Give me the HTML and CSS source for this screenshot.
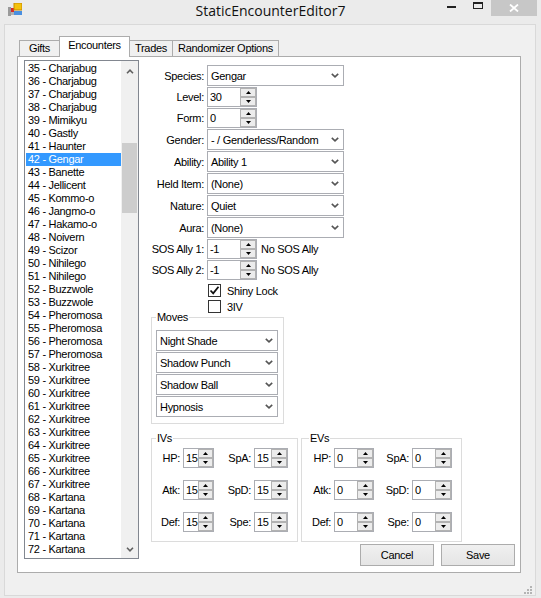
FILE: index.html
```html
<!DOCTYPE html>
<html lang="en">
<head>
  <meta charset="UTF-8">
  <title>StaticEncounterEditor7</title>
  <link rel="stylesheet" href="styles.css">
</head>
<body>
<div class="window">
  <div class="titlebar">
    <div class="title-left">
      <svg class="app-icon" width="14" height="13" viewBox="0 0 14 13">
        <rect x="0" y="4" width="3" height="9" fill="#9a9a9a"/>
        <rect x="3" y="5" width="3" height="4" fill="#d8262a"/>
        <rect x="3" y="9" width="3" height="3" fill="#b0b0b0"/>
        <rect x="6" y="0" width="8" height="7" fill="#f4c20d"/>
        <rect x="6" y="0" width="8" height="7" fill="none" stroke="#c98a00" stroke-width="1"/>
        <rect x="6" y="8" width="8" height="4" fill="#4a8fe0"/>
      </svg>
    </div>
    <div class="title">StaticEncounterEditor7</div>
    <div class="caption-buttons">
      <span class="cap-min"></span>
      <span class="cap-max"></span>
      <span class="cap-close">
        <svg width="10" height="8" viewBox="0 0 10 8"><path d="M1 0.5 L9 7.5 M9 0.5 L1 7.5" stroke="#fff" stroke-width="1.8"/></svg>
      </span>
    </div>
  </div>

  <div class="client">
    <div class="tabcontrol">
      <div class="tabstrip">
        <div class="tab tab-gifts">Gifts</div>
        <div class="tab tab-encounters active">Encounters</div>
        <div class="tab tab-trades">Trades</div>
        <div class="tab tab-random">Randomizer Options</div>
      </div>

      <div class="tabpage">
        <div class="listbox">
          <ul class="items">
            <li>35 - Charjabug</li>
            <li>36 - Charjabug</li>
            <li>37 - Charjabug</li>
            <li>38 - Charjabug</li>
            <li>39 - Mimikyu</li>
            <li>40 - Gastly</li>
            <li>41 - Haunter</li>
            <li class="selected">42 - Gengar</li>
            <li>43 - Banette</li>
            <li>44 - Jellicent</li>
            <li>45 - Kommo-o</li>
            <li>46 - Jangmo-o</li>
            <li>47 - Hakamo-o</li>
            <li>48 - Noivern</li>
            <li>49 - Scizor</li>
            <li>50 - Nihilego</li>
            <li>51 - Nihilego</li>
            <li>52 - Buzzwole</li>
            <li>53 - Buzzwole</li>
            <li>54 - Pheromosa</li>
            <li>55 - Pheromosa</li>
            <li>56 - Pheromosa</li>
            <li>57 - Pheromosa</li>
            <li>58 - Xurkitree</li>
            <li>59 - Xurkitree</li>
            <li>60 - Xurkitree</li>
            <li>61 - Xurkitree</li>
            <li>62 - Xurkitree</li>
            <li>63 - Xurkitree</li>
            <li>64 - Xurkitree</li>
            <li>65 - Xurkitree</li>
            <li>66 - Xurkitree</li>
            <li>67 - Xurkitree</li>
            <li>68 - Kartana</li>
            <li>69 - Kartana</li>
            <li>70 - Kartana</li>
            <li>71 - Kartana</li>
            <li>72 - Kartana</li>
          </ul>
          <div class="vscroll">
            <div class="scroll-arrow up">
              <svg width="8" height="5" viewBox="0 0 8 5"><path d="M1 4.2 L4 1.2 L7 4.2" fill="none" stroke="#606060" stroke-width="1.6"/></svg>
            </div>
            <div class="scroll-thumb"></div>
            <div class="scroll-arrow down">
              <svg width="8" height="5" viewBox="0 0 8 5"><path d="M1 0.8 L4 3.8 L7 0.8" fill="none" stroke="#606060" stroke-width="1.6"/></svg>
            </div>
          </div>
        </div>

        <div class="editor">
          <div class="fields">
            <label>Species:</label>
            <div class="combo"><span>Gengar</span><i class="chev"></i></div>

            <label>Level:</label>
            <div class="num"><span class="val">30</span><span class="spin"><b class="up"></b><b class="down"></b></span></div>

            <label>Form:</label>
            <div class="num"><span class="val">0</span><span class="spin"><b class="up"></b><b class="down"></b></span></div>

            <label>Gender:</label>
            <div class="combo"><span>- / Genderless/Random</span><i class="chev"></i></div>

            <label>Ability:</label>
            <div class="combo"><span>Ability 1</span><i class="chev"></i></div>

            <label>Held Item:</label>
            <div class="combo"><span>(None)</span><i class="chev"></i></div>

            <label>Nature:</label>
            <div class="combo"><span>Quiet</span><i class="chev"></i></div>

            <label>Aura:</label>
            <div class="combo"><span>(None)</span><i class="chev"></i></div>

            <label>SOS Ally 1:</label>
            <div class="sos">
              <div class="num"><span class="val">-1</span><span class="spin"><b class="up"></b><b class="down"></b></span></div>
              <span class="sos-name">No SOS Ally</span>
            </div>

            <label>SOS Ally 2:</label>
            <div class="sos">
              <div class="num"><span class="val">-1</span><span class="spin"><b class="up"></b><b class="down"></b></span></div>
              <span class="sos-name">No SOS Ally</span>
            </div>
          </div>

          <div class="checks">
            <div class="check">
              <span class="box">
                <svg width="11" height="11" viewBox="0 0 11 11"><path d="M1.5 5.5 L4.2 8.3 L9.5 1.8" fill="none" stroke="#111" stroke-width="1.8"/></svg>
              </span>
              Shiny Lock
            </div>
            <div class="check"><span class="box"></span>3IV</div>
          </div>

          <fieldset class="group moves">
            <legend>Moves</legend>
            <div class="combo"><span>Night Shade</span><i class="chev"></i></div>
            <div class="combo"><span>Shadow Punch</span><i class="chev"></i></div>
            <div class="combo"><span>Shadow Ball</span><i class="chev"></i></div>
            <div class="combo"><span>Hypnosis</span><i class="chev"></i></div>
          </fieldset>

          <div class="stat-groups">
            <fieldset class="group ivs">
              <legend>IVs</legend>
              <div class="stat-grid">
                <label>HP:</label>
                <div class="num"><span class="val">15</span><span class="spin"><b class="up"></b><b class="down"></b></span></div>
                <label>SpA:</label>
                <div class="num"><span class="val">15</span><span class="spin"><b class="up"></b><b class="down"></b></span></div>
                <label>Atk:</label>
                <div class="num"><span class="val">15</span><span class="spin"><b class="up"></b><b class="down"></b></span></div>
                <label>SpD:</label>
                <div class="num"><span class="val">15</span><span class="spin"><b class="up"></b><b class="down"></b></span></div>
                <label>Def:</label>
                <div class="num"><span class="val">15</span><span class="spin"><b class="up"></b><b class="down"></b></span></div>
                <label>Spe:</label>
                <div class="num"><span class="val">15</span><span class="spin"><b class="up"></b><b class="down"></b></span></div>
              </div>
            </fieldset>

            <fieldset class="group evs">
              <legend>EVs</legend>
              <div class="stat-grid">
                <label>HP:</label>
                <div class="num"><span class="val">0</span><span class="spin"><b class="up"></b><b class="down"></b></span></div>
                <label>SpA:</label>
                <div class="num"><span class="val">0</span><span class="spin"><b class="up"></b><b class="down"></b></span></div>
                <label>Atk:</label>
                <div class="num"><span class="val">0</span><span class="spin"><b class="up"></b><b class="down"></b></span></div>
                <label>SpD:</label>
                <div class="num"><span class="val">0</span><span class="spin"><b class="up"></b><b class="down"></b></span></div>
                <label>Def:</label>
                <div class="num"><span class="val">0</span><span class="spin"><b class="up"></b><b class="down"></b></span></div>
                <label>Spe:</label>
                <div class="num"><span class="val">0</span><span class="spin"><b class="up"></b><b class="down"></b></span></div>
              </div>
            </fieldset>
          </div>

          <div class="actions">
            <button>Cancel</button>
            <button>Save</button>
          </div>
        </div>
      </div>
    </div>

    <svg class="grip" width="8" height="8" viewBox="0 0 8 8">
      <rect x="6" y="0" width="2" height="2" fill="#b4b4b4"/>
      <rect x="3" y="3" width="2" height="2" fill="#b4b4b4"/>
      <rect x="6" y="3" width="2" height="2" fill="#b4b4b4"/>
      <rect x="0" y="6" width="2" height="2" fill="#b4b4b4"/>
      <rect x="3" y="6" width="2" height="2" fill="#b4b4b4"/>
      <rect x="6" y="6" width="2" height="2" fill="#b4b4b4"/>
    </svg>
  </div>
</div>
</body>
</html>
```

FILE: styles.css
```css
* {
  box-sizing: border-box;
}

body {
  margin: 0;
  background: #ebebeb;
  font-family: 'Liberation Sans', Arial, sans-serif;
  font-size: 11px;
  letter-spacing: -0.3px;
  color: #000;
}

.window {
  width: 541px;
  height: 598px;
  display: flex;
  flex-direction: column;
  background: #ebebeb;
}

/* title bar */

.titlebar {
  height: 24px;
  display: grid;
  grid-template-columns: 1fr auto 1fr;
}

.title-left {
  padding: 3px 0 0 8px;
}

.app-icon {
  display: block;
}

.title {
  font-family: 'Open Sans', 'Noto Sans', sans-serif;
  font-size: 14px;
  letter-spacing: 0;
  line-height: 22px;
  color: #111;
}

.caption-buttons {
  justify-self: end;
  display: flex;
  align-items: flex-start;
  padding-right: 4px;
}

.cap-min {
  width: 9px;
  height: 2px;
  margin-top: 6px;
  background: #222;
}

.cap-max {
  width: 10px;
  height: 7px;
  margin: 2px 0 0 17px;
  border: 1px solid #222;
  border-top-width: 2px;
}

.cap-close {
  width: 46px;
  height: 16px;
  margin-left: 8px;
  background: #c7c7c7;
  display: flex;
  align-items: center;
  justify-content: center;
}

.cap-close svg {
  display: block;
}

/* client area */

.client {
  position: relative;
  flex: 1;
  margin: 0 5px 2px 4px;
  border: 1px solid #d9d9d9;
  background: #f0f0f0;
  padding: 11px 0 0 12px;
}

.grip {
  position: absolute;
  right: 3px;
  bottom: 1px;
}

.tabcontrol {
  width: 504px;
}

.tabstrip {
  height: 21px;
  display: flex;
  align-items: flex-end;
  padding-left: 2px;
}

.tab {
  height: 16px;
  margin-bottom: 1px;
  border: 1px solid #acacac;
  border-bottom: none;
  background: #f0f0f0;
  text-align: center;
  line-height: 15px;
}

.tab + .tab {
  margin-left: -1px;
}

.tab.active {
  position: relative;
  z-index: 1;
  height: 21px;
  margin-bottom: 0;
  background: #fff;
  line-height: 17px;
}

.tab-gifts { width: 41px; }
.tab-encounters { width: 71px; }
.tab-trades { width: 44px; }
.tab-random { width: 107px; }

.tabpage {
  height: 517px;
  margin-top: -1px;
  border: 1px solid #acacac;
  background: #fff;
  padding: 3px 0 0 6px;
  display: flex;
  align-items: flex-start;
}

/* list box */

.listbox {
  width: 115px;
  height: 499px;
  border: 1px solid #828790;
  display: flex;
  background: #fff;
}

.items {
  list-style: none;
  margin: 0;
  padding: 1px 0 0 0;
  flex: 1;
}

.items li {
  height: 13px;
  line-height: 13px;
  margin-left: 1px;
  padding-left: 2px;
  white-space: nowrap;
}

.items li.selected {
  background: #3399ff;
  color: #fff;
}

.vscroll {
  width: 17px;
  background: #f0f0f0;
  display: flex;
  flex-direction: column;
  align-items: center;
}

.scroll-arrow {
  height: 17px;
  display: flex;
  align-items: center;
  justify-content: center;
}

.scroll-arrow.up {
  padding-top: 3px;
}

.scroll-arrow.down {
  margin-top: auto;
}

.scroll-arrow svg {
  display: block;
}

.scroll-thumb {
  width: 15px;
  height: 70px;
  margin-top: 65px;
  background: #cdcdcd;
}

/* editor column */

.editor {
  width: 375px;
  margin: 5px 0 0 1px;
}

.fields {
  display: grid;
  grid-template-columns: 64px 137px;
  column-gap: 3px;
  row-gap: 1px;
  align-items: center;
}

.fields label,
.stat-grid label {
  text-align: right;
  white-space: nowrap;
}

.combo {
  height: 21px;
  border: 1px solid #abadb3;
  background: #fff;
  display: flex;
  align-items: center;
  padding: 0 3px 0 3px;
  white-space: nowrap;
}

.combo span {
  flex: 1;
}

.chev {
  width: 8px;
  height: 5px;
  margin-right: 1px;
  background: url("data:image/svg+xml,%3Csvg xmlns='http://www.w3.org/2000/svg' width='8' height='5'%3E%3Cpath d='M0.8 0.8 L4 3.8 L7.2 0.8' fill='none' stroke='%23555' stroke-width='1.6'/%3E%3C/svg%3E") no-repeat;
}

.num {
  width: 50px;
  height: 20px;
  border: 1px solid #abadb3;
  background: #fff;
  display: flex;
}

.num .val {
  flex: 1;
  padding-left: 2px;
  line-height: 18px;
}

.spin {
  width: 16px;
  display: flex;
  flex-direction: column;
}

.spin b {
  flex: 1;
  border: 1px solid #b2b2b2;
  background-color: #ececec;
  background-repeat: no-repeat;
  background-position: center;
}

.spin .up {
  background-image: url("data:image/svg+xml,%3Csvg xmlns='http://www.w3.org/2000/svg' width='5' height='3'%3E%3Cpath d='M0 3 L2.5 0 L5 3 Z' fill='%23000'/%3E%3C/svg%3E");
}

.spin .down {
  background-image: url("data:image/svg+xml,%3Csvg xmlns='http://www.w3.org/2000/svg' width='5' height='3'%3E%3Cpath d='M0 0 L2.5 3 L5 0 Z' fill='%23000'/%3E%3C/svg%3E");
}

.sos {
  display: flex;
  align-items: center;
  gap: 4px;
}

/* check boxes */

.checks {
  margin: 3px 0 0 67px;
  display: flex;
  flex-direction: column;
  gap: 1px;
}

.check {
  height: 15px;
  display: flex;
  align-items: center;
  gap: 6px;
}

.check .box {
  width: 13px;
  height: 13px;
  margin-left: 1px;
  border: 1px solid #333;
  background: #fff;
  display: flex;
  align-items: center;
  justify-content: center;
}

/* group boxes */

.group {
  margin: 0 0 0 11px;
  border: 1px solid #dcdcdc;
  min-width: 0;
}

.group legend {
  padding: 0 1px;
  line-height: 13px;
}

.moves {
  width: 133px;
  margin-top: -3px;
  padding: 6px 5px 6px 4px;
  display: flex;
  flex-direction: column;
  gap: 1px;
}

.stat-groups {
  display: flex;
  gap: 3px;
  margin: 8px 0 0 11px;
}

.stat-groups .group {
  margin: 0;
  padding: 3px 0 9px 0;
}

.ivs {
  width: 147px;
}

.ivs legend {
  margin-left: 4px;
}

.evs {
  width: 161px;
}

.evs legend {
  margin-left: 7px;
}

.stat-grid {
  display: grid;
  column-gap: 3px;
  row-gap: 12px;
  align-items: center;
}

.ivs .stat-grid {
  grid-template-columns: 28px 31px 34px 34px;
}

.evs .stat-grid {
  grid-template-columns: 29px 40px 32px 40px;
}

.stat-grid .num {
  width: auto;
}

/* buttons */

.actions {
  display: flex;
  justify-content: flex-end;
  gap: 7px;
  margin-top: 2px;
}

button {
  width: 74px;
  height: 22px;
  border: 1px solid #acacac;
  background: linear-gradient(#f0f0f0, #e5e5e5);
  font-family: 'Liberation Sans', Arial, sans-serif;
  font-size: 11px;
  letter-spacing: -0.3px;
  color: #000;
  padding: 0;
}
```
